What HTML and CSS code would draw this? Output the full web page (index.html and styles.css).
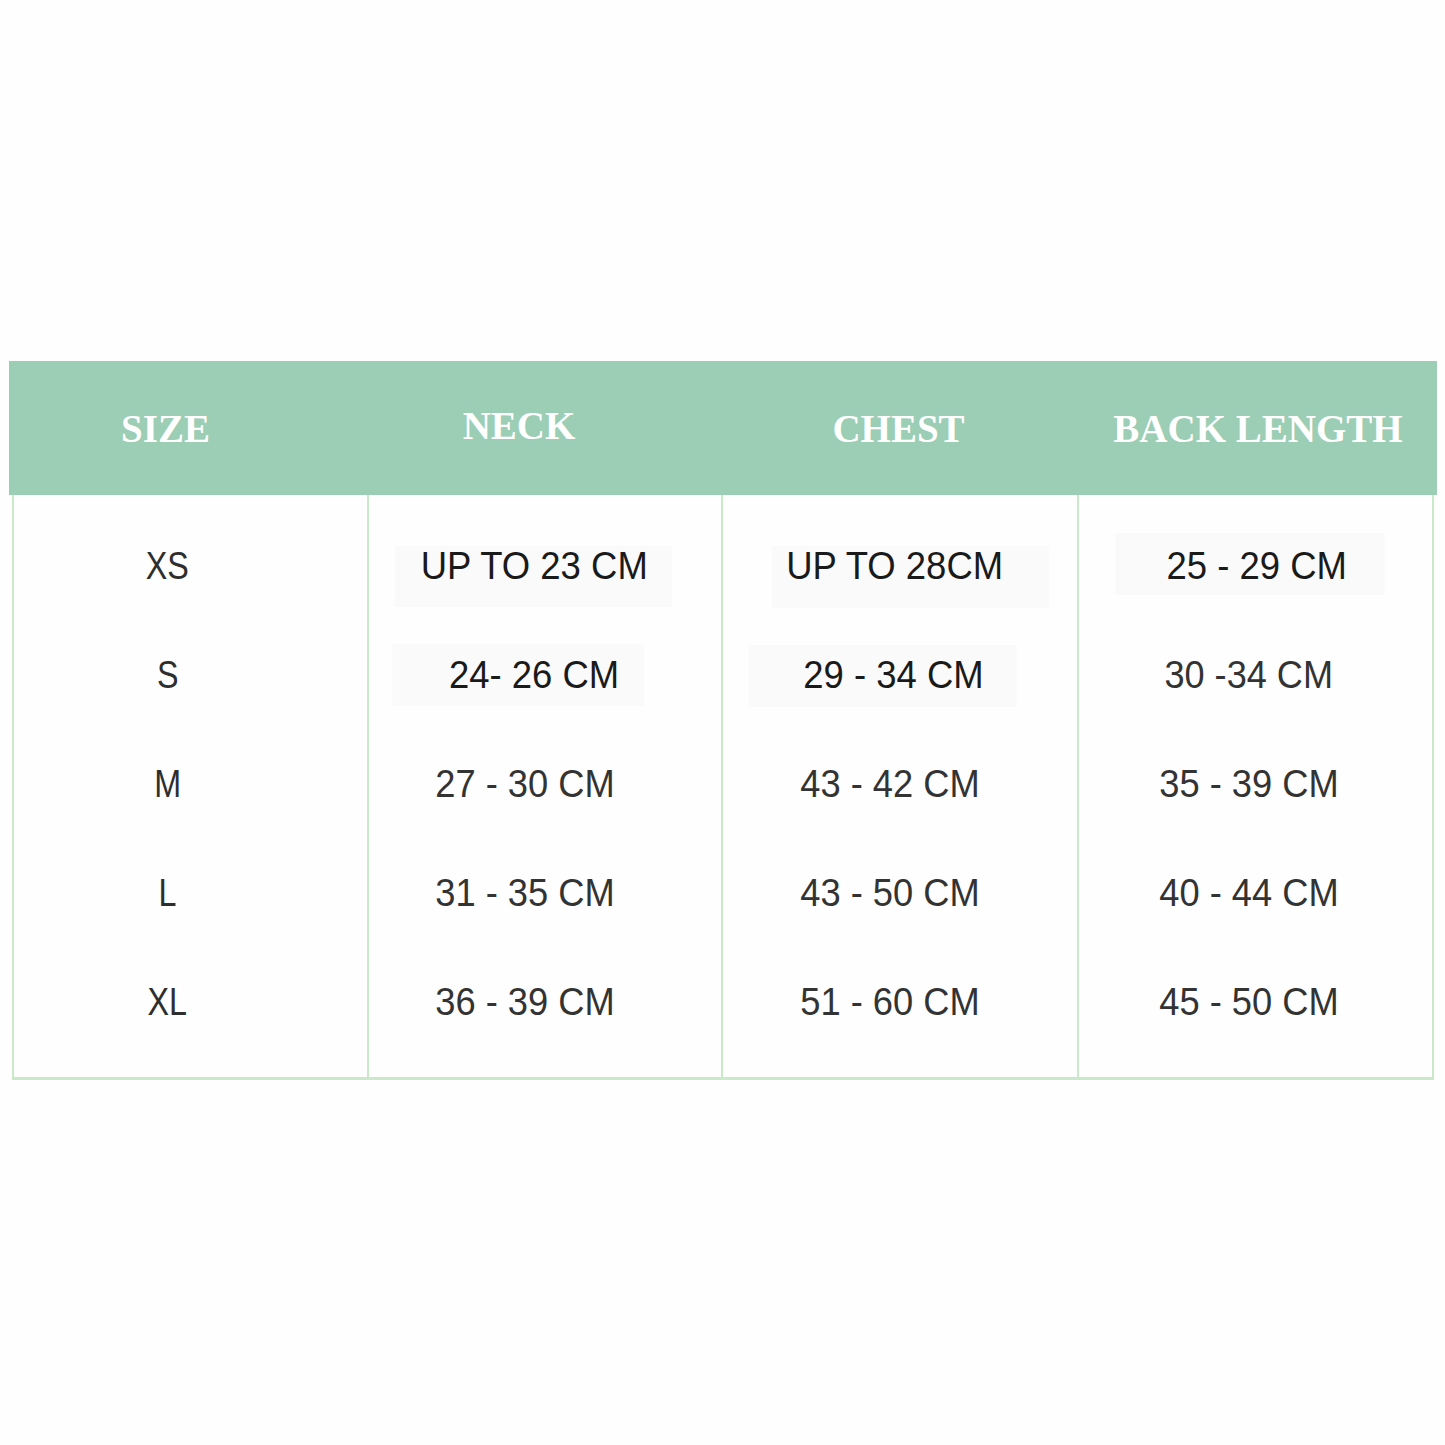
FILE: index.html
```html
<!DOCTYPE html>
<html>
<head>
<meta charset="utf-8">
<link rel="stylesheet" href="styles.css">
</head>
<body>
<div class="page">
  <div class="chart">
    <div class="head">
      <div class="hcell h-size">SIZE</div>
      <div class="hcell h-neck">NECK</div>
      <div class="hcell h-chest">CHEST</div>
      <div class="hcell h-back">BACK LENGTH</div>
    </div>
    <div class="body">
      <div class="col col-size">
        <div class="cell"><span class="t sz">XS</span></div>
        <div class="cell"><span class="t sz">S</span></div>
        <div class="cell"><span class="t sz">M</span></div>
        <div class="cell"><span class="t sz">L</span></div>
        <div class="cell"><span class="t sz">XL</span></div>
      </div>
      <div class="col col-neck">
        <div class="cell"><span class="t box box-n1">UP TO 23 CM</span></div>
        <div class="cell"><span class="t box box-n2">24- 26 CM</span></div>
        <div class="cell sh"><span class="t nar">27 - 30 CM</span></div>
        <div class="cell sh"><span class="t nar">31 - 35 CM</span></div>
        <div class="cell sh"><span class="t nar">36 - 39 CM</span></div>
      </div>
      <div class="col col-chest">
        <div class="cell"><span class="t box box-c1">UP TO 28CM</span></div>
        <div class="cell"><span class="t box box-c2">29 - 34 CM</span></div>
        <div class="cell sh"><span class="t nar">43 - 42 CM</span></div>
        <div class="cell sh"><span class="t nar">43 - 50 CM</span></div>
        <div class="cell sh"><span class="t nar">51 - 60 CM</span></div>
      </div>
      <div class="col col-back">
        <div class="cell"><span class="t box box-b1">25 - 29 CM</span></div>
        <div class="cell sh"><span class="t mid">30 -34 CM</span></div>
        <div class="cell sh"><span class="t nar">35 - 39 CM</span></div>
        <div class="cell sh"><span class="t nar">40 - 44 CM</span></div>
        <div class="cell sh"><span class="t nar">45 - 50 CM</span></div>
      </div>
    </div>
  </div>
</div>
</body>
</html>
```

FILE: styles.css
```css
html, body {
  margin: 0;
  padding: 0;
  background: #fefefe;
}

.page {
  width: 1445px;
  height: 1445px;
  padding: 361px 0 0 9px;
  box-sizing: border-box;
}

.chart {
  width: 1428px;
}

.head {
  display: flex;
  height: 134px;
  background: #9ccdb5;
  color: #ffffff;
  font-family: "Liberation Serif", "Times New Roman", serif;
  font-weight: bold;
  font-size: 39px;
}

.hcell {
  display: flex;
  align-items: center;
  justify-content: center;
  box-sizing: border-box;
}

.h-size { width: 359px; padding: 0 46px 0 0; }
.h-neck { width: 354px; padding: 0 52px 6px 0; }
.h-chest { width: 357px; padding: 0 4px 0 0; }
.h-back { width: 358px; padding: 0; }

.body {
  display: flex;
  margin: 0 3px 0 3px;
  border-left: 2px solid #c8eac8;
  border-bottom: 3px solid #c8eac8;
  height: 585px;
  box-sizing: border-box;
  font-family: "Liberation Sans", Arial, sans-serif;
}

.col {
  display: flex;
  flex-direction: column;
  padding-top: 16px;
  box-sizing: border-box;
  border-right: 2px solid #c8eac8;
}

.col-size { width: 355px; }
.col-neck { width: 354px; }
.col-chest { width: 357px; }
.col-back { width: 355px; }

.cell {
  height: 109px;
  display: flex;
  align-items: center;
  justify-content: center;
}

.col-size .cell { padding-right: 46px; }
.col-neck .cell { padding-right: 20px; }
.col-neck .cell.sh { padding-right: 40px; }
.col-chest .cell { padding-right: 12px; }
.col-chest .cell.sh { padding-right: 20px; }
.col-back .cell { padding-left: 3px; }
.col-back .cell.sh { padding-left: 0; padding-right: 13px; }

.t {
  display: inline-block;
  font-size: 38px;
  line-height: 1;
  color: #1a1a1a;
  white-space: nowrap;
}

.sz {
  color: #2e2e2e;
  transform: scaleX(0.85);
}

.nar {
  color: #333333;
  transform: scaleX(0.955);
}

.mid {
  color: #333333;
  transform: scaleX(0.95);
}

.box {
  background: #fafafa;
  transform: scaleX(0.96);
}

.box-n1 { padding: 1px 25px 22px 27px; margin: 21px 2px 0 0; }
.box-n2 { padding: 12px 26px 12px 59px; margin: 0 33px 0 0; }
.box-c1 { padding: 1px 48px 23px 15px; margin: 22px 0 0 33px; }
.box-c2 { padding: 11px 34px 13px 57px; margin: 2px 23px 0 0; }
.box-b1 { padding: 14px 39px 10px 53px; margin: 0 14px 4px 0; }
```
